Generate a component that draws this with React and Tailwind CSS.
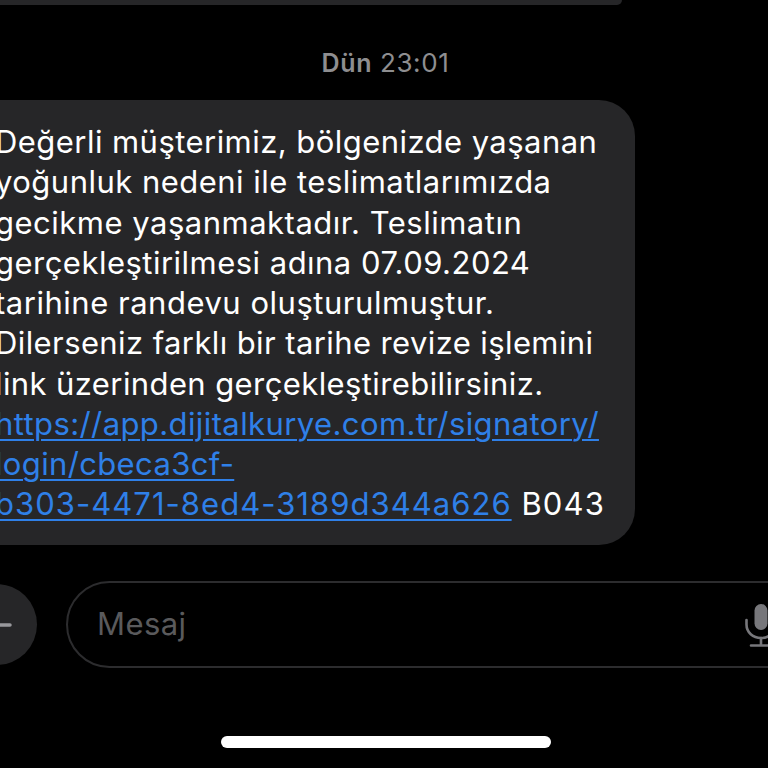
const lines = [
  ["Değerli müşterimiz, bölgenizde yaşanan", "tracking-[0.45px]"],
  ["yoğunluk nedeni ile teslimatlarımızda", "tracking-[0.48px]"],
  ["gecikme yaşanmaktadır. Teslimatın", "tracking-[0.5px]"],
  ["gerçekleştirilmesi adına 07.09.2024", "tracking-[0.48px]"],
  ["tarihine randevu oluşturulmuştur.", "tracking-[0.52px]"],
  ["Dilerseniz farklı bir tarihe revize işlemini", "tracking-[0.4px]"],
  ["link üzerinden gerçekleştirebilirsiniz.", "tracking-[0.4px]"],
];

export default function App() {
  return (
    <div className="w-[768px] h-[768px] bg-black overflow-hidden flex flex-col font-['Inter','Liberation_Sans',sans-serif]">
      <div className="h-[5px] w-[622px] shrink-0 bg-[#262628] rounded-br-[14px]" />
      <div className="mt-[43px] h-[30px] shrink-0 flex items-center justify-center text-[26px] leading-[30px] text-[#8e8e90] tracking-[0.6px] whitespace-nowrap">
        <span className="ml-[3px]"><span className="font-semibold text-[25px]">Dün</span> 23:01</span>
      </div>
      <div className="mt-[22px] ml-[-40px] w-[675px] h-[445px] shrink-0 bg-[#262628] rounded-[36px] pl-[35px] pt-[22px] text-[31px] leading-[40.25px] text-white whitespace-nowrap">
        {lines.map(([text, track]) => (
          <div key={text} className={track}>{text}</div>
        ))}
        <div className="text-[#2f80e8]">
          <div className="tracking-[0.4px]"><span className="underline decoration-2 underline-offset-[4px]">https://app.dijitalkurye.com.tr/signatory/</span></div>
          <div className="tracking-[0.35px]"><span className="underline decoration-2 underline-offset-[4px]">login/cbeca3cf-</span></div>
          <div className="tracking-[1.03px]">
            <span className="underline decoration-2 underline-offset-[4px]">b303-4471-8ed4-3189d344a626</span>
            <span className="text-white tracking-[1.1px]"> B043</span>
          </div>
        </div>
      </div>
      <div className="mt-[36px] flex items-center shrink-0">
        <div className="ml-[-44px] w-[81px] h-[81px] rounded-full bg-[#262628] shrink-0 flex items-center justify-center">
          <svg width="32" height="32" viewBox="0 0 32 32">
            <path d="M16 3v26M3 16h26" stroke="#98989c" strokeWidth="3.5" strokeLinecap="round" />
          </svg>
        </div>
        <div className="ml-[29px] w-[760px] h-[87px] shrink-0 rounded-[44px] border-2 border-[#2c2c2e] flex items-center pl-[29px] text-[31px] tracking-[0.4px] text-[#5a5a5c]">
          <span>Mesaj</span>
          <svg width="34" height="44" viewBox="0 0 34 44" className="ml-[558px] shrink-0">
            <rect x="10.5" y="1" width="13" height="26" rx="6.500" fill="#77777b" />
            <path d="M2.5 17v4.5C2.5 29.5 9 35 17 35s14.500-5.500 14.500-13.500V17" fill="none" stroke="#77777b" strokeWidth="2.6" strokeLinecap="round" />
            <path d="M17 35v7M7 42.500h20" fill="none" stroke="#77777b" strokeWidth="2.6" strokeLinecap="round" />
          </svg>
        </div>
      </div>
      <div className="mt-[68px] ml-[221px] w-[330px] h-[12px] rounded-full bg-white shrink-0" />
    </div>
  );
}
